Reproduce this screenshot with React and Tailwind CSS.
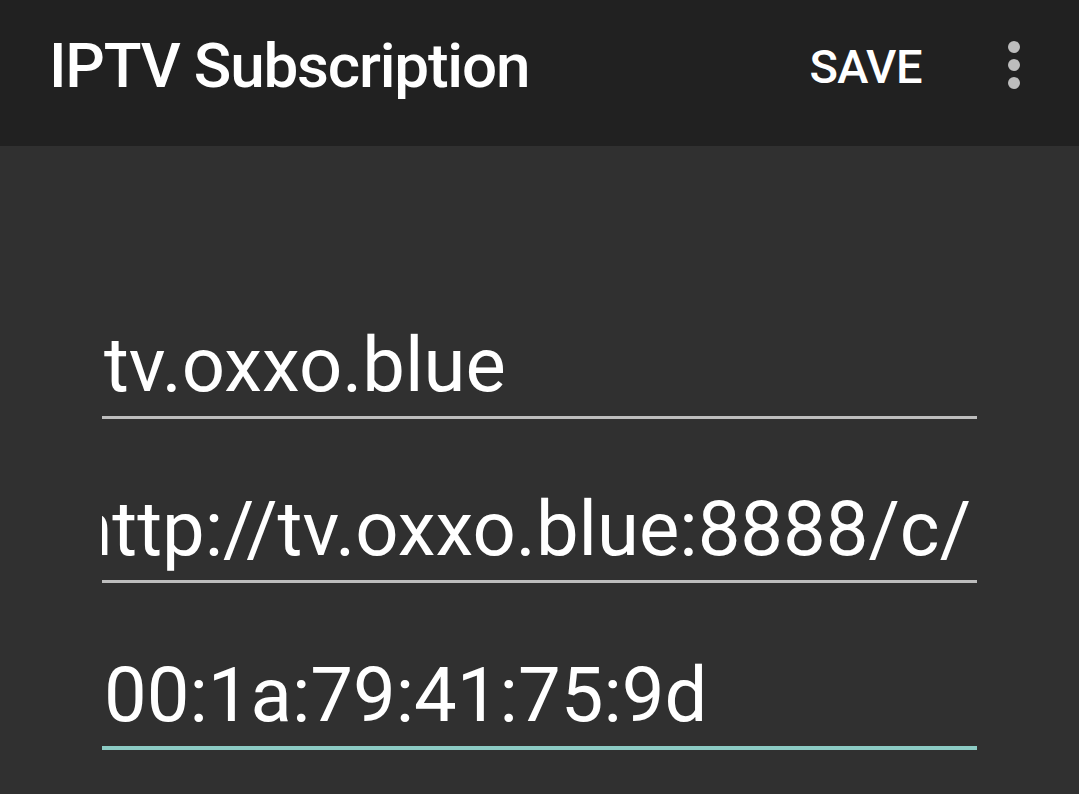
import { useState } from "react";

// Single underlined text field, Material dark style
const Field = ({ value, focused = false, alignEnd = false, className = "" }) => (
  <div
    className={`pb-[6px] ${
      focused
        ? "border-b-[4px] border-[#8ccbc4]"
        : "border-b-[3px] border-[#bdbdbd]"
    } ${className}`}
  >
    <div
      className={`flex overflow-hidden whitespace-nowrap pl-[2px] text-[76px] leading-[90px] text-white ${
        alignEnd ? "justify-end pr-[6px]" : ""
      }`}
    >
      <span className="shrink-0">{value}</span>
    </div>
  </div>
);

const App = () => {
  const [fields] = useState({
    name: "tv.oxxo.blue",
    url: "http://tv.oxxo.blue:8888/c/",
    mac: "00:1a:79:41:75:9d",
  });

  return (
    <div
      className="flex min-h-[794px] flex-col bg-[#303030]"
      style={{ fontFamily: "Roboto, 'Liberation Sans', sans-serif" }}
    >
      {/* Toolbar */}
      <header className="flex h-[146px] items-center bg-[#212121] pb-[14px] pl-[49px] pr-[59px]">
        <h1 className="flex-1 text-[62px] font-medium leading-none tracking-[-1.2px] text-white">
          IPTV Subscription
        </h1>
        <button className="mr-[86px] text-[47px] font-medium leading-none tracking-[-0.5px] text-white">
          SAVE
        </button>
        <svg width="12" height="48" viewBox="0 0 12 48" className="mt-[-2px]">
          <circle cx="6" cy="6" r="6" fill="#bdbdbd" />
          <circle cx="6" cy="24" r="6" fill="#bdbdbd" />
          <circle cx="6" cy="42" r="6" fill="#bdbdbd" />
        </svg>
      </header>

      {/* Form */}
      <main className="flex flex-col px-[102px] pt-[174px]">
        <Field value={fields.name} />
        <Field value={fields.url} alignEnd className="mt-[65px]" />
        <Field value={fields.mac} focused className="mt-[67px]" />
      </main>
    </div>
  );
};

export default App;
